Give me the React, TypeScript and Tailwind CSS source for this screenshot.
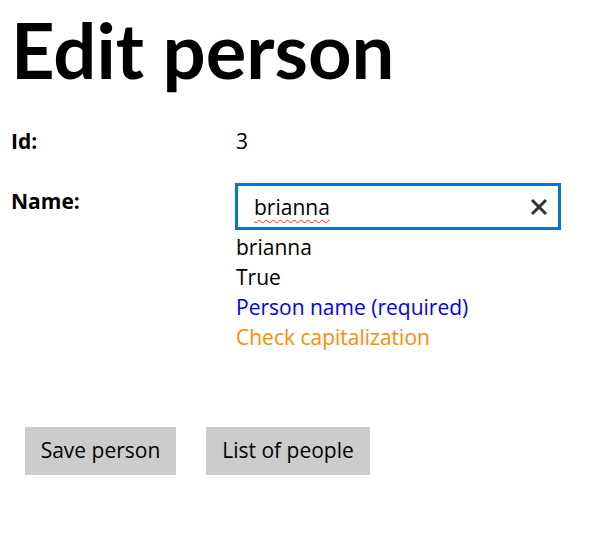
export default function App() {
  return (
    <div className="h-[552px] w-[610px] bg-white text-black" style={{ fontFamily: '"Open Sans", "Noto Sans", sans-serif' }}>
      <h1 className="pl-[11px] pt-[4px] text-[76px] font-bold leading-[92px]" style={{ fontFamily: 'Lato, sans-serif' }}>
        Edit person
      </h1>

      <div className="mt-[30px] grid grid-cols-[235px_1fr] text-[21px] leading-[30px]">
        <div className="pl-[11px] font-bold">Id:</div>
        <div className="pl-[1px]">3</div>

        <div className="mt-[30px] pl-[11px] font-bold">Name:</div>
        <div className="mt-[30px] flex flex-col">
          <div className="-mt-[3px] mb-[2px] flex h-[47px] w-[326px] items-center border-[3px] border-[#0078d7] pl-[16px] pr-[10px]">
            <span className="flex-1 underline decoration-red-500 decoration-wavy decoration-1 underline-offset-4">brianna</span>
            <svg width="18" height="18" viewBox="0 0 18 18" className="text-[#333]">
              <path d="M2 2 L16 16 M16 2 L2 16" stroke="currentColor" strokeWidth="3" />
            </svg>
          </div>
          <div className="pl-[1px]">brianna</div>
          <div className="pl-[1px]">True</div>
          <div className="pl-[1px] text-[#0000ff]">Person name (required)</div>
          <div className="pl-[1px] text-[#ff8c00]">Check capitalization</div>
        </div>
      </div>

      <div className="mt-[75px] flex gap-[30px] pl-[25px] text-[21px]">
        <button className="h-[48px] w-[151px] bg-[#cccccc]">Save person</button>
        <button className="h-[48px] w-[164px] bg-[#cccccc]">List of people</button>
      </div>
    </div>
  )
}
